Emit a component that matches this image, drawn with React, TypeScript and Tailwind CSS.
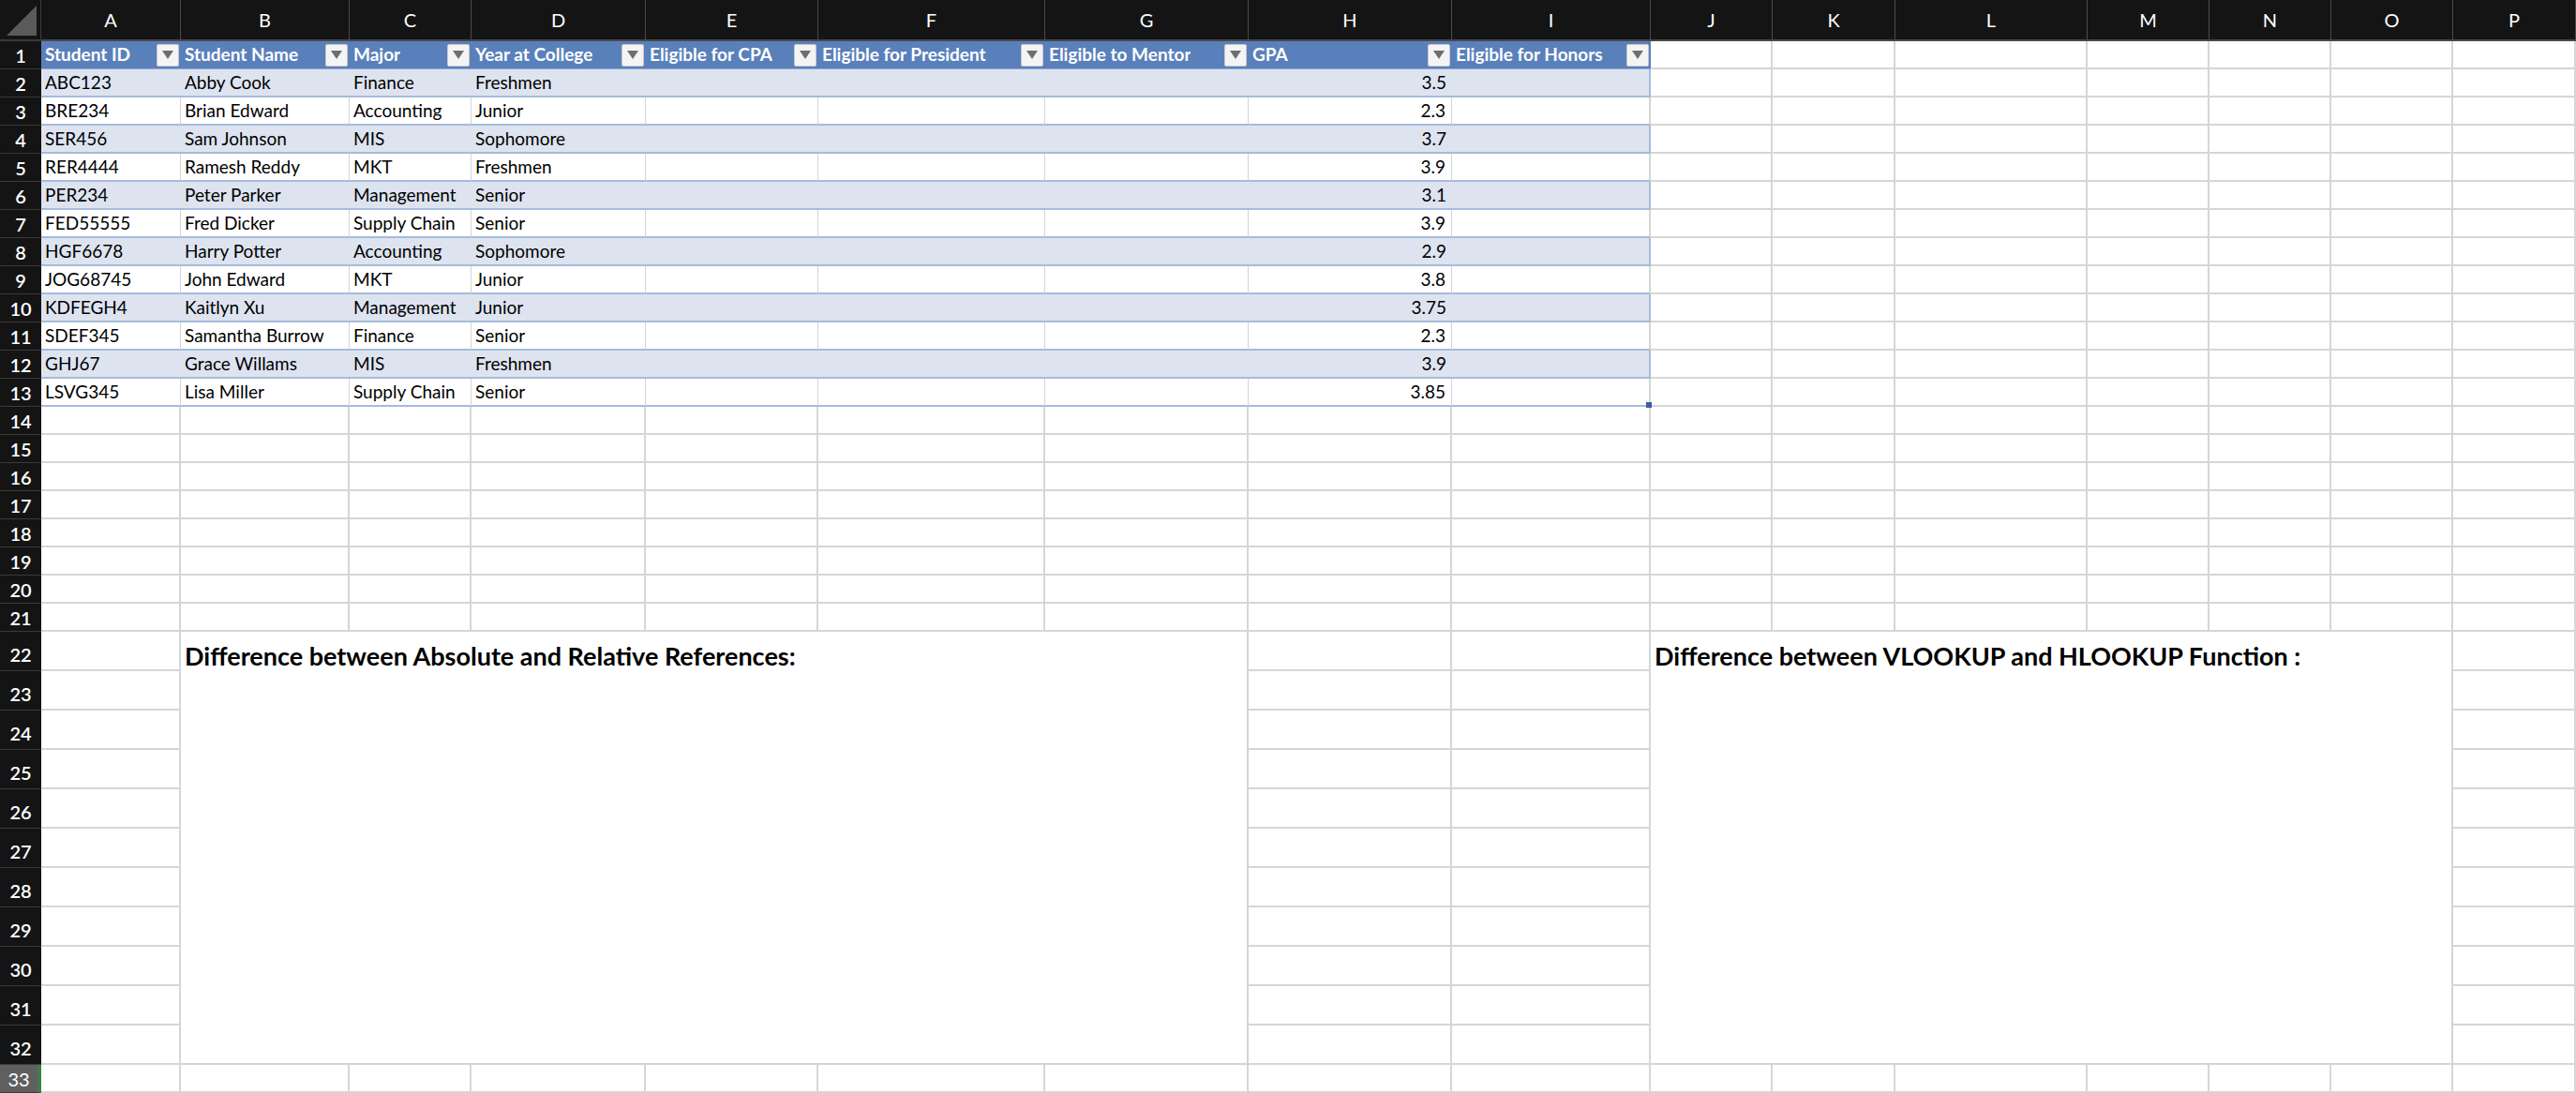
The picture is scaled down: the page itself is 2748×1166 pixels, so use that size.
import React from 'react';

const letters = ['A', 'B', 'C', 'D', 'E', 'F', 'G', 'H', 'I', 'J', 'K', 'L', 'M', 'N', 'O', 'P'];

const headers = [
  'Student ID',
  'Student Name',
  'Major',
  'Year at College',
  'Eligible for CPA',
  'Eligible for President',
  'Eligible to Mentor',
  'GPA',
  'Eligible for Honors',
];

const students: [string, string, string, string, string][] = [
  ['ABC123', 'Abby Cook', 'Finance', 'Freshmen', '3.5'],
  ['BRE234', 'Brian Edward', 'Accounting', 'Junior', '2.3'],
  ['SER456', 'Sam Johnson', 'MIS', 'Sophomore', '3.7'],
  ['RER4444', 'Ramesh Reddy', 'MKT', 'Freshmen', '3.9'],
  ['PER234', 'Peter Parker', 'Management', 'Senior', '3.1'],
  ['FED55555', 'Fred Dicker', 'Supply Chain', 'Senior', '3.9'],
  ['HGF6678', 'Harry Potter', 'Accounting', 'Sophomore', '2.9'],
  ['JOG68745', 'John Edward', 'MKT', 'Junior', '3.8'],
  ['KDFEGH4', 'Kaitlyn Xu', 'Management', 'Junior', '3.75'],
  ['SDEF345', 'Samantha Burrow', 'Finance', 'Senior', '2.3'],
  ['GHJ67', 'Grace Willams', 'MIS', 'Freshmen', '3.9'],
  ['LSVG345', 'Lisa Miller', 'Supply Chain', 'Senior', '3.85'],
];

const FilterButton = () => (
  <span className="ml-auto flex h-[24px] w-[24px] shrink-0 items-center justify-center rounded-[2px] border border-[#c8c8c8] bg-[#f4f4f4]">
    <svg width="12" height="10" viewBox="0 0 12 10">
      <polygon points="0,0 12,0 6,9" fill="#6e6e6e" />
    </svg>
  </span>
);

const RowHeader = ({ n }: { n: number }) => {
  const tall = n >= 22 && n <= 32;
  const selected = n === 33;
  return (
    <div
      className={`flex justify-center border-b border-[#3a3a3a] text-[20px] text-white ${
        tall ? 'items-end pb-[2px]' : 'items-center'
      } ${selected ? 'border-r-4 border-r-[#3f7f4f] bg-[#5f5f5f]' : 'bg-[#141414] font-semibold'}`}
    >
      {n}
    </div>
  );
};

const App: React.FC = () => {
  const cells: React.ReactNode[] = [];

  // Column header row
  cells.push(
    <div key="corner" className="relative border-b-2 border-r border-[#3a3a3a] bg-[#141414]">
      <svg className="absolute bottom-[4px] right-[4px]" width="32" height="32" viewBox="0 0 32 32">
        <polygon points="32,0 32,32 0,32" fill="#5a5a5a" />
      </svg>
    </div>
  );
  letters.forEach((l) => {
    cells.push(
      <div
        key={`col-${l}`}
        className="flex items-center justify-center border-b-2 border-r border-[#4a4a4a] bg-[#141414] text-[20px] text-white"
      >
        {l}
      </div>
    );
  });

  for (let r = 1; r <= 33; r++) {
    cells.push(<RowHeader key={`rh-${r}`} n={r} />);
    for (let c = 0; c < 16; c++) {
      const key = `${r}-${c}`;
      const inTable = c < 9 && r <= 13;

      // merged text boxes
      if (r >= 22 && r <= 32 && ((c >= 1 && c <= 6) || (c >= 9 && c <= 14))) {
        if (r === 22 && (c === 1 || c === 9)) {
          cells.push(
            <div
              key={key}
              className="col-span-6 row-span-11 border-b-2 border-r-2 border-[#d4d4d4] bg-white px-[4px] pt-[6px] text-[27px] font-bold text-black"
            >
              {c === 1
                ? 'Difference between Absolute and Relative References:'
                : 'Difference between VLOOKUP and HLOOKUP Function :'}
            </div>
          );
        }
        continue;
      }

      if (r === 1 && inTable) {
        cells.push(
          <div
            key={key}
            className="flex items-center gap-1 border-b border-[#8fa9d4] bg-[#5a80bb] pl-[4px] pr-[2px] text-[19px] font-bold whitespace-nowrap text-white"
          >
            <span className="overflow-hidden">{headers[c]}</span>
            <FilterButton />
          </div>
        );
        continue;
      }

      if (inTable) {
        const s = students[r - 2];
        const striped = r % 2 === 0;
        const text = c < 4 ? s[c] : c === 7 ? s[4] : '';
        cells.push(
          <div
            key={key}
            className={`relative flex items-center overflow-visible border-b-2 border-[#a6bbdc] px-[4px] text-[19px] whitespace-nowrap text-black ${
              striped ? 'bg-[#dde4f0]' : 'border-r border-r-[#d4d4d4] bg-white'
            } ${c === 7 ? 'justify-end pr-[6px]' : ''} ${c === 8 ? 'border-r-2 border-r-[#a6bbdc]' : ''}`}
          >
            {text}
            {r === 13 && c === 8 && (
              <span className="absolute -bottom-[3px] -right-[3px] h-[6px] w-[6px] bg-[#3a5ea8]" />
            )}
          </div>
        );
        continue;
      }

      cells.push(
        <div key={key} className="border-b-2 border-r-2 border-[#d6d6d6] bg-white" />
      );
    }
  }

  return (
    <div
      className="grid h-[1166px] w-[2748px] grid-cols-[44px_149px_180px_130px_186px_184px_242px_217px_217px_212px_130px_131px_205px_130px_130px_130px_131px] grid-rows-[44px_repeat(21,30px)_repeat(11,42px)_30px] overflow-hidden bg-white"
      style={{ fontFamily: 'Lato, "Open Sans", sans-serif' }}
    >
      {cells}
    </div>
  );
};

export default App;
